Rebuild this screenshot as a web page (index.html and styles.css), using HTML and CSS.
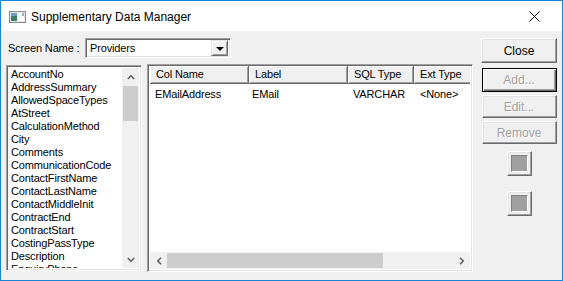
FILE: index.html
```html
<!DOCTYPE html>
<html>
<head>
<meta charset="utf-8">
<link rel="stylesheet" href="styles.css">
</head>
<body>
<div class="window">
  <div class="titlebar">
    <svg class="appicon" width="17" height="12" viewBox="0 0 17 12">
      <rect x="0.5" y="0.5" width="16" height="11" fill="#e8e8e8" stroke="#8a8a8a"/>
      <rect x="2" y="2" width="6" height="8" fill="#3f7f6a"/>
      <rect x="2" y="2" width="6" height="3" fill="#6fa0c8"/>
      <rect x="9" y="2" width="6" height="8" fill="#ffffff"/>
      <rect x="13" y="2" width="2" height="3" fill="#9ab0c8"/>
    </svg>
    <span class="title">Supplementary Data Manager</span>
    <svg class="closex" width="11" height="11" viewBox="0 0 11 11">
      <path d="M0.5 0.5 L10.5 10.5 M10.5 0.5 L0.5 10.5" stroke="#000" stroke-width="1" fill="none"/>
    </svg>
  </div>
  <div class="content">
    <div class="main">
      <div class="toprow">
        <span class="lbl">Screen Name :</span>
        <div class="combo">
          <span class="combo-text">Providers</span>
          <div class="combo-btn"><span class="tri"></span></div>
        </div>
      </div>
      <div class="panes">
        <div class="listbox">
          <ul class="items">
            <li>AccountNo</li>
            <li>AddressSummary</li>
            <li>AllowedSpaceTypes</li>
            <li>AtStreet</li>
            <li>CalculationMethod</li>
            <li>City</li>
            <li>Comments</li>
            <li>CommunicationCode</li>
            <li>ContactFirstName</li>
            <li>ContactLastName</li>
            <li>ContactMiddleInit</li>
            <li>ContractEnd</li>
            <li>ContractStart</li>
            <li>CostingPassType</li>
            <li>Description</li>
            <li>EnquiryPhone</li>
          </ul>
          <div class="vscroll">
            <div class="sb-arrow">
              <svg width="8" height="6" viewBox="0 0 8 6"><polyline points="0.8,5 4,1.8 7.2,5" fill="none" stroke="#606060" stroke-width="1.6"/></svg>
            </div>
            <div class="vtrack"><div class="vthumb"></div></div>
            <div class="sb-arrow">
              <svg width="8" height="6" viewBox="0 0 8 6"><polyline points="0.8,1 4,4.2 7.2,1" fill="none" stroke="#606060" stroke-width="1.6"/></svg>
            </div>
          </div>
        </div>
        <div class="listview">
          <div class="lv-inner">
            <div class="lv-header">
              <div class="hcell c1">Col Name</div>
              <div class="hcell c2">Label</div>
              <div class="hcell c3">SQL Type</div>
              <div class="hcell c4">Ext Type</div>
            </div>
            <div class="lv-row">
              <div class="cell c1">EMailAddress</div>
              <div class="cell c2">EMail</div>
              <div class="cell c3">VARCHAR</div>
              <div class="cell c4">&lt;None&gt;</div>
            </div>
            <div class="lv-space"></div>
            <div class="hscroll">
              <div class="sb-harrow">
                <svg width="6" height="8" viewBox="0 0 6 8"><polyline points="5,0.8 1.8,4 5,7.2" fill="none" stroke="#606060" stroke-width="1.6"/></svg>
              </div>
              <div class="htrack"><div class="hthumb"></div></div>
              <div class="sb-harrow">
                <svg width="6" height="8" viewBox="0 0 6 8"><polyline points="1,0.8 4.2,4 1,7.2" fill="none" stroke="#606060" stroke-width="1.6"/></svg>
              </div>
            </div>
          </div>
        </div>
      </div>
    </div>
    <div class="side">
      <div class="btn close">Close</div>
      <div class="btn default disabled">Add...</div>
      <div class="btn disabled">Edit...</div>
      <div class="btn disabled">Remove</div>
      <div class="sqbtn first"><span class="sqin"></span></div>
      <div class="sqbtn second"><span class="sqin"></span></div>
    </div>
  </div>
</div>
</body>
</html>
```

FILE: styles.css
```css
* { box-sizing: border-box; }
html, body { margin: 0; padding: 0; background: #ffffff; }
body { font-family: "Liberation Sans", Arial, sans-serif; font-size: 11px; color: #000; letter-spacing: -0.15px; }

.window {
  width: 563px;
  height: 281px;
  border: 1px solid #1883d7;
  display: flex;
  flex-direction: column;
  background: #f0f0f0;
  overflow: hidden;
}

.titlebar {
  height: 30px;
  background: #ffffff;
  display: flex;
  align-items: center;
  padding-left: 8px;
  flex: none;
  letter-spacing: 0;
}
.appicon { margin-top: 1px; }
.title {
  font-size: 12px;
  margin-left: 5px;
  margin-top: 1px;
  color: #000;
}
.closex { margin-left: auto; margin-right: 22px; margin-top: 1px; }

.content {
  flex: 1;
  display: flex;
  padding: 7px 0 0 5px;
}

.main { width: 467px; }

.toprow {
  display: flex;
  align-items: center;
  height: 20px;
  padding-left: 2px;
}
.lbl { width: 77px; }

.combo {
  width: 146px;
  height: 20px;
  display: flex;
  align-items: center;
  background: #fff;
  border: 1px solid;
  border-color: #a0a0a0 #ffffff #ffffff #a0a0a0;
  box-shadow: inset 1px 1px #696969, inset -1px -1px #e3e3e3;
  padding: 2px;
}
.combo-text { flex: 1; padding-left: 2px; }
.combo-btn {
  width: 17px;
  height: 16px;
  background: #f0f0f0;
  border: 1px solid;
  border-color: #e3e3e3 #696969 #696969 #e3e3e3;
  box-shadow: inset 1px 1px #fff, inset -1px -1px #a0a0a0;
  display: flex;
  align-items: center;
  justify-content: center;
}
.tri {
  width: 0; height: 0;
  border-left: 4px solid transparent;
  border-right: 4px solid transparent;
  border-top: 4px solid #000;
  margin-top: 1px;
}

.panes {
  display: flex;
  align-items: flex-start;
  margin-top: 6px;
}

.listbox {
  width: 136px;
  height: 206px;
  margin-top: 1px;
  background: #fff;
  border: 1px solid;
  border-color: #a0a0a0 #ffffff #ffffff #a0a0a0;
  box-shadow: inset 1px 1px #696969, inset -1px -1px #e3e3e3;
  padding: 2px;
  display: flex;
  overflow: hidden;
}
.items {
  list-style: none;
  margin: 0;
  padding: 0 0 0 2px;
  flex: 1;
  overflow: hidden;
}
.items li { height: 13px; line-height: 13px; white-space: nowrap; }

.vscroll {
  width: 17px;
  display: flex;
  flex-direction: column;
  background: #f0f0f0;
}
.sb-arrow {
  height: 17px;
  display: flex;
  align-items: center;
  justify-content: center;
  flex: none;
}
.vtrack { flex: 1; padding-top: 1px; }
.vthumb {
  width: 15px;
  height: 35px;
  margin-left: 1px;
  background: #cdcdcd;
}

.listview {
  width: 326px;
  height: 208px;
  margin-left: 5px;
  border: 1px solid;
  border-color: #a0a0a0 #ffffff #ffffff #a0a0a0;
  box-shadow: inset 1px 1px #696969, inset -1px -1px #e3e3e3;
  padding: 1px 2px 2px 1px;
  background: #fff;
}
.lv-inner {
  height: 100%;
  display: flex;
  flex-direction: column;
  overflow: hidden;
  padding-left: 1px;
}
.lv-header {
  display: flex;
  height: 18px;
  flex: none;
  background: #f0f0f0;
  white-space: nowrap;
}
.hcell {
  height: 18px;
  line-height: 16px;
  padding-left: 6px;
  background: #f0f0f0;
  border-right: 1px solid #696969;
  border-bottom: 1px solid #696969;
  box-shadow: inset 1px 1px #fff, inset -1px -1px #a0a0a0;
  flex: none;
}
.c1 { width: 99px; }
.c2 { width: 99px; }
.c3 { width: 66px; }
.c4 { width: 80px; }
.lv-row { display: flex; height: 14px; line-height: 14px; margin-top: 3px; white-space: nowrap; }
.cell { padding-left: 5px; flex: none; }
.cell.c2 { padding-left: 3px; }
.cell.c3 { padding-left: 5px; }
.cell.c4 { padding-left: 6px; }
.lv-space { flex: 1; }

.hscroll {
  height: 17px;
  display: flex;
  background: #f0f0f0;
  flex: none;
}
.sb-harrow {
  width: 17px;
  display: flex;
  align-items: center;
  justify-content: center;
  flex: none;
}
.htrack { flex: 1; padding-top: 1px; }
.hthumb { width: 216px; height: 15px; background: #cdcdcd; }

.side {
  margin-left: 8px;
  width: 76px;
  display: flex;
  flex-direction: column;
  align-items: center;
  letter-spacing: 0;
}
.btn {
  width: 76px;
  height: 25px;
  display: flex;
  align-items: center;
  justify-content: center;
  background: #f0f0f0;
  border: 1px solid;
  border-color: #ffffff #696969 #696969 #ffffff;
  box-shadow: inset -1px -1px #a0a0a0, inset 1px 1px #e3e3e3;
  flex: none;
}
.btn.close { font-size: 12px; }
.btn.default {
  margin-top: 5px;
  height: 24px;
  border: 1px solid #000;
  box-shadow: inset 1px 1px #fff, inset -1px -1px #696969, inset -2px -2px #a0a0a0;
}
.btn.disabled {
  color: #a0a0a0;
  text-shadow: 1px 1px #fff;
  width: 75px;
  font-size: 12px;
}
.btn.disabled:not(.default) { height: 23px; margin-top: 3px; }
.btn.default { width: 75px; }

.sqbtn {
  width: 25px;
  height: 25px;
  background: #f0f0f0;
  border: 1px solid;
  border-color: #ffffff #696969 #696969 #ffffff;
  box-shadow: inset -1px -1px #a0a0a0, inset 1px 1px #e3e3e3;
  display: flex;
  align-items: center;
  justify-content: center;
}
.sqbtn.first { margin-top: 7px; }
.sqbtn.second { margin-top: 15px; }
.sqin {
  width: 17px;
  height: 17px;
  background: #a0a0a0;
  border: 1px solid;
  border-color: #808080 #ffffff #ffffff #808080;
}
```
